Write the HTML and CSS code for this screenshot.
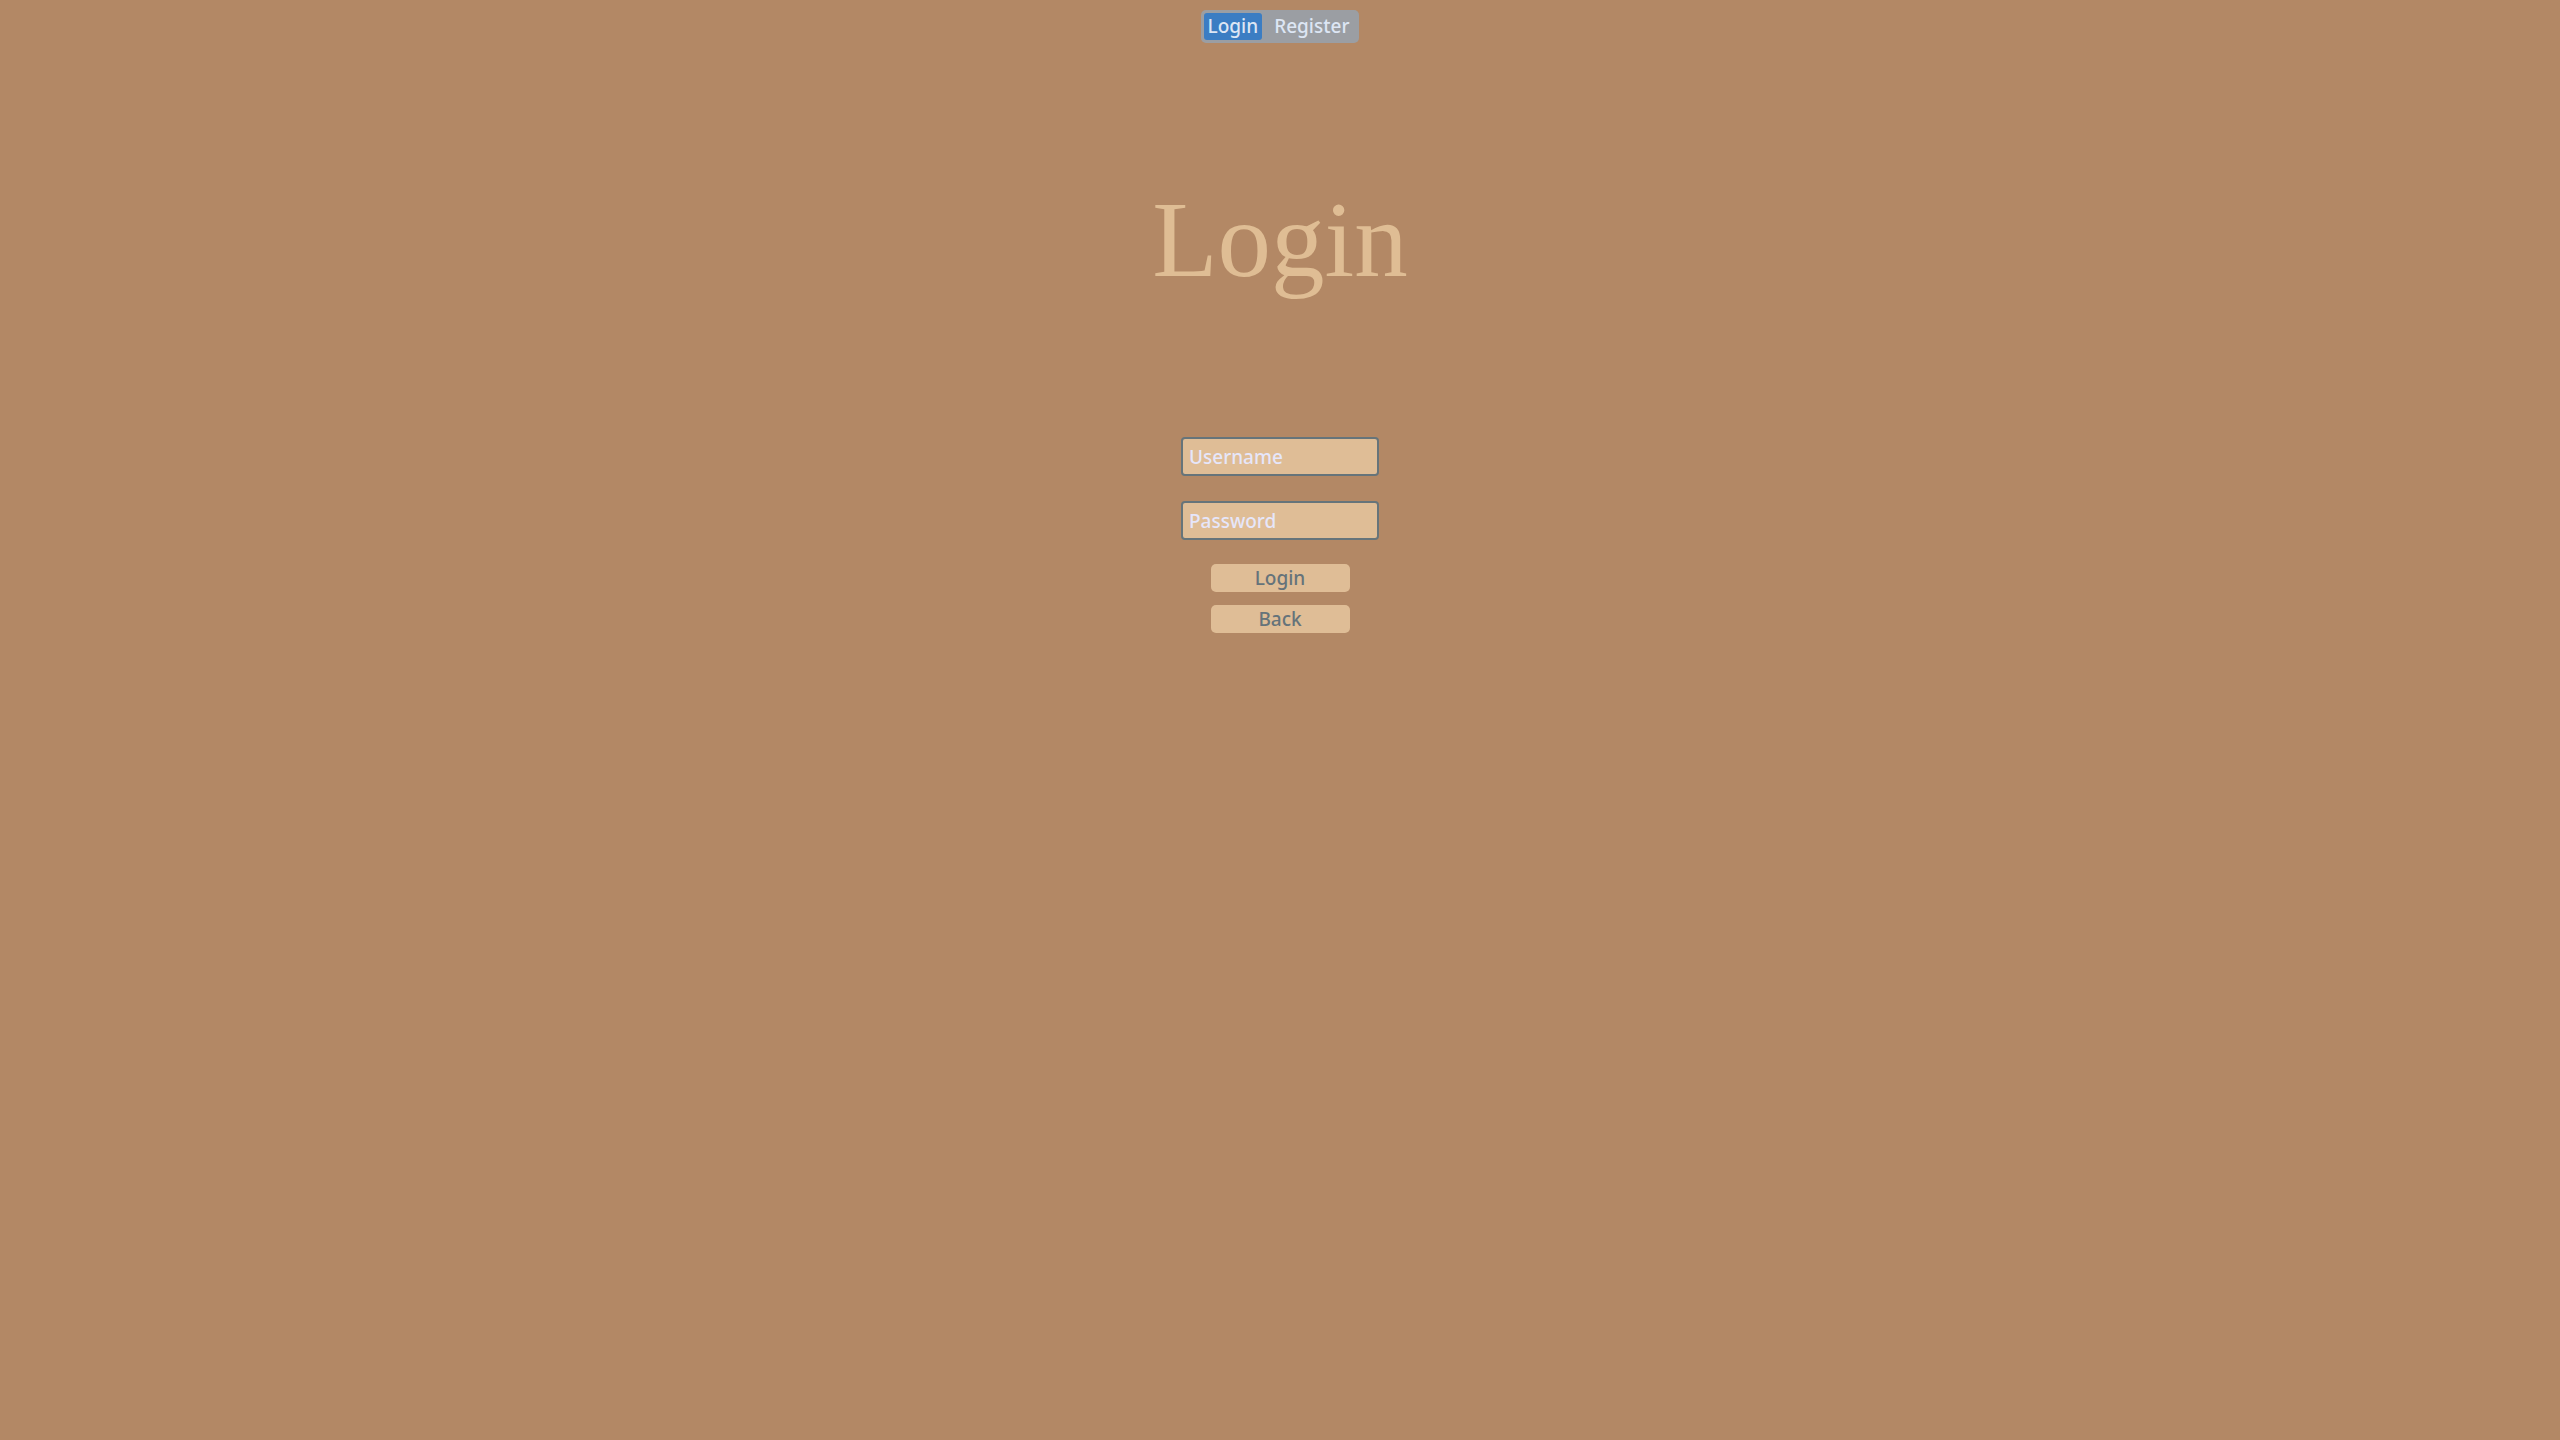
FILE: index.html
```html
<!DOCTYPE html>
<html>
<head>
<meta charset="utf-8">
<title>Login</title>
<link rel="stylesheet" href="styles.css">
</head>
<body>
<nav class="topbar">
  <div class="tabgroup">
    <span class="tab tab-active">Login</span>
    <span class="tab">Register</span>
  </div>
</nav>
<main class="page">
  <h1 class="title">Login</h1>
  <form class="form">
    <input class="field" type="text" placeholder="Username">
    <input class="field" type="password" placeholder="Password">
    <div class="buttons">
      <button class="btn" type="button">Login</button>
      <button class="btn" type="button">Back</button>
    </div>
  </form>
</main>
</body>
</html>
```

FILE: styles.css
```css
html, body {
  margin: 0;
  padding: 0;
}
body {
  background: #b38865;
  width: 2560px;
  height: 1440px;
  font-family: "Noto Sans", "Open Sans", sans-serif;
}
.topbar {
  display: flex;
  justify-content: center;
  padding-top: 10px;
}
.tabgroup {
  display: flex;
  align-items: center;
  background: #9b9ea3;
  border-radius: 5px;
  padding: 3px 6px 3px 3px;
  gap: 8px;
  height: 27px;
}
.tab {
  color: #dde6f4;
  font-size: 19px;
  font-weight: 500;
  line-height: 27px;
  padding: 0 4px;
  border-radius: 3px;
}
.tab-active {
  background: #3b7dc3;
}
.page {
  display: flex;
  flex-direction: column;
  align-items: center;
}
.title {
  margin: 127px 0 0 0;
  font-family: "Liberation Serif", "DejaVu Serif", serif;
  font-weight: 400;
  font-size: 107px;
  line-height: 140px;
  color: #dfbd94;
}
.form {
  display: flex;
  flex-direction: column;
  align-items: center;
  margin-top: 127px;
}
.field {
  box-sizing: border-box;
  width: 198px;
  height: 39px;
  margin: 0 0 25px 0;
  padding: 0 6px;
  border: 2px solid #66747a;
  border-radius: 4px;
  background: #dfbd96;
  font-family: "Noto Sans", "Open Sans", sans-serif;
  font-size: 19px;
  font-weight: 500;
  color: #65737a;
  outline: none;
}
.field::placeholder {
  color: #e6e6fa;
  opacity: 1;
}
.buttons {
  display: flex;
  flex-direction: column;
  align-items: center;
  gap: 13px;
  margin-top: -1px;
}
.btn {
  box-sizing: border-box;
  width: 139px;
  height: 28px;
  border: none;
  border-radius: 5px;
  background: #dfbd96;
  color: #65737a;
  font-family: "Noto Sans", "Open Sans", sans-serif;
  font-size: 19px;
  font-weight: 500;
  line-height: 28px;
  padding: 0;
}
```
